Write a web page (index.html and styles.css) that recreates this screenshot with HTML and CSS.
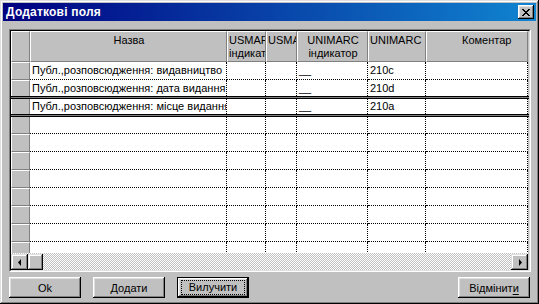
FILE: index.html
```html
<!DOCTYPE html>
<html lang="uk">
<head>
    <meta charset="UTF-8">
    <title>Додаткові поля</title>
    <link rel="stylesheet" href="styles.css">
</head>
<body>
    <div class="window">
        <div class="titlebar">
            <span class="title">Додаткові поля</span>
            <button class="close-btn">
                <svg width="8" height="7" viewBox="0 0 8 7"><path d="M0 0h2v1h1v1h2v-1h1v-1h2v1h-1v1h-1v1h-1v1h1v1h1v1h1v1h-2v-1h-1v-1h-2v1h-1v1h-2v-1h1v-1h1v-1h1v-1h-1v-1h-1v-1h-1z" fill="#000"/></svg>
            </button>
        </div>

        <div class="content">
            <div class="grid">
                <div class="grid-inner">
                    <div class="row head">
                        <div class="ind"></div>
                        <div class="hcell center">Назва</div>
                        <div class="hcell">USMARC<br>індикатор</div>
                        <div class="hcell">USMARC</div>
                        <div class="hcell center">UNIMARC<br>індикатор</div>
                        <div class="hcell">UNIMARC</div>
                        <div class="hcell comment">Коментар</div>
                    </div>

                    <div class="grid-body">
                        <div class="row">
                            <div class="ind"></div>
                            <div class="cell">Публ.,розповсюдження: видавництво</div>
                            <div class="cell"></div>
                            <div class="cell"></div>
                            <div class="cell">__</div>
                            <div class="cell">210c</div>
                            <div class="cell"></div>
                        </div>
                        <div class="row">
                            <div class="ind"></div>
                            <div class="cell">Публ.,розповсюдження: дата видання</div>
                            <div class="cell"></div>
                            <div class="cell"></div>
                            <div class="cell">__</div>
                            <div class="cell">210d</div>
                            <div class="cell"></div>
                        </div>
                        <div class="row current">
                            <div class="ind"></div>
                            <div class="cell">Публ.,розповсюдження: місце видання</div>
                            <div class="cell"></div>
                            <div class="cell"></div>
                            <div class="cell">__</div>
                            <div class="cell">210a</div>
                            <div class="cell"></div>
                        </div>
                        <div class="row"><div class="ind"></div><div class="cell"></div><div class="cell"></div><div class="cell"></div><div class="cell"></div><div class="cell"></div><div class="cell"></div></div>
                        <div class="row"><div class="ind"></div><div class="cell"></div><div class="cell"></div><div class="cell"></div><div class="cell"></div><div class="cell"></div><div class="cell"></div></div>
                        <div class="row"><div class="ind"></div><div class="cell"></div><div class="cell"></div><div class="cell"></div><div class="cell"></div><div class="cell"></div><div class="cell"></div></div>
                        <div class="row"><div class="ind"></div><div class="cell"></div><div class="cell"></div><div class="cell"></div><div class="cell"></div><div class="cell"></div><div class="cell"></div></div>
                        <div class="row"><div class="ind"></div><div class="cell"></div><div class="cell"></div><div class="cell"></div><div class="cell"></div><div class="cell"></div><div class="cell"></div></div>
                        <div class="row"><div class="ind"></div><div class="cell"></div><div class="cell"></div><div class="cell"></div><div class="cell"></div><div class="cell"></div><div class="cell"></div></div>
                        <div class="row"><div class="ind"></div><div class="cell"></div><div class="cell"></div><div class="cell"></div><div class="cell"></div><div class="cell"></div><div class="cell"></div></div>
                        <div class="row"><div class="ind"></div><div class="cell"></div><div class="cell"></div><div class="cell"></div><div class="cell"></div><div class="cell"></div><div class="cell"></div></div>
                    </div>

                    <div class="hscroll">
                        <div class="sb-btn">
                            <svg width="4" height="7" viewBox="0 0 4 7"><path d="M3 0v7L0 3.5z" fill="#000"/></svg>
                        </div>
                        <div class="sb-thumb"></div>
                        <div class="sb-track"></div>
                        <div class="sb-btn">
                            <svg width="4" height="7" viewBox="0 0 4 7"><path d="M1 0v7L4 3.5z" fill="#000"/></svg>
                        </div>
                    </div>
                </div>
            </div>

            <div class="buttons">
                <button class="btn">Ok</button>
                <button class="btn">Додати</button>
                <button class="btn default"><span class="focus">Вилучити</span></button>
                <button class="btn cancel">Відмінит<u>и</u></button>
            </div>
        </div>
    </div>
</body>
</html>
```

FILE: styles.css
```css
body {
    margin: 0;
    padding: 0;
    font-family: 'Liberation Sans', Arial, sans-serif;
    font-size: 11px;
    color: #000;
    background-color: #c0c0c0;
}

.window {
    width: 539px;
    height: 304px;
    box-sizing: border-box;
    padding: 3px;
    background-color: #c0c0c0;
    box-shadow: inset -1px -1px #000, inset 1px 1px #dfdfdf, inset -2px -2px #808080, inset 2px 2px #fff;
}

.titlebar {
    height: 18px;
    display: flex;
    align-items: center;
    justify-content: space-between;
    padding: 0 2px 0 3px;
    background: linear-gradient(to right, #000080, #1084d0);
}

.title {
    color: #fff;
    font-weight: bold;
    font-size: 12px;
    letter-spacing: 0.2px;
}

.close-btn {
    width: 16px;
    height: 14px;
    padding: 0;
    border: none;
    background-color: #c0c0c0;
    display: flex;
    align-items: center;
    justify-content: center;
    box-shadow: inset -1px -1px #000, inset 1px 1px #fff, inset -2px -2px #808080, inset 2px 2px #dfdfdf;
}

.content {
    padding: 8px 5px 0 6px;
}

.grid {
    height: 243px;
    box-sizing: border-box;
    border: 1px solid;
    border-color: #808080 #fff #fff #808080;
}

.grid-inner {
    height: 100%;
    box-sizing: border-box;
    border: 1px solid;
    border-color: #000 #dfdfdf #dfdfdf #000;
    display: flex;
    flex-direction: column;
    background-color: #c0c0c0;
}

.row {
    display: grid;
    grid-template-columns: 19px 197px 39px 31px 71px 58px 102px;
    height: 18px;
    flex-shrink: 0;
}

.row.head {
    height: 31px;
}

.grid-body {
    height: 191px;
    overflow: hidden;
}

.ind {
    box-sizing: border-box;
    background-color: #c0c0c0;
    border-top: 1px solid #fff;
    border-left: 1px solid #fff;
    border-right: 1px solid #808080;
    border-bottom: 1px solid #808080;
}

.hcell {
    box-sizing: border-box;
    background-color: #c0c0c0;
    border-top: 1px solid #fff;
    border-left: 1px solid #fff;
    border-right: 1px solid #808080;
    border-bottom: 1px solid #808080;
    padding: 2px 0 0 1px;
    line-height: 13px;
    white-space: nowrap;
    overflow: hidden;
}

.hcell.center {
    text-align: center;
}

.hcell.comment {
    padding-left: 35px;
}

.cell {
    box-sizing: border-box;
    background-color: #fff;
    border-right: 1px dotted #000;
    border-bottom: 1px dotted #000;
    padding: 2px 0 0 2px;
    line-height: 13px;
    white-space: nowrap;
    overflow: hidden;
}

.row.current {
    position: relative;
}

.row.current::before,
.row.current::after {
    content: '';
    position: absolute;
    left: 0;
    right: 0;
    height: 3px;
    background: linear-gradient(#000 0 1px, #808080 1px 2px, #000 2px 3px);
}

.row.current::before {
    top: -2px;
}

.row.current::after {
    bottom: -1px;
}

.hscroll {
    height: 17px;
    display: flex;
    width: 517px;
    background: repeating-conic-gradient(#c0c0c0 0 25%, #fff 0 50%) 0 0 / 2px 2px;
}

.sb-btn {
    width: 17px;
    height: 16px;
    margin-top: 1px;
    box-sizing: border-box;
    background-color: #c0c0c0;
    display: flex;
    align-items: center;
    justify-content: center;
    box-shadow: inset -1px -1px #000, inset 1px 1px #dfdfdf, inset -2px -2px #808080, inset 2px 2px #fff;
}

.sb-thumb {
    width: 15px;
    height: 16px;
    margin-top: 1px;
    background-color: #c0c0c0;
    box-shadow: inset -1px -1px #000, inset 1px 1px #dfdfdf, inset -2px -2px #808080, inset 2px 2px #fff;
}

.sb-track {
    flex: 1;
}

.buttons {
    display: flex;
    gap: 12px;
    margin-top: 5px;
    padding-right: 1px;
}

.btn {
    width: 72px;
    height: 21px;
    padding: 0;
    border: none;
    font-family: 'Liberation Sans', Arial, sans-serif;
    font-size: 11px;
    color: #000;
    background-color: #c0c0c0;
    box-shadow: inset -1px -1px #000, inset 1px 1px #fff, inset -2px -2px #808080, inset 2px 2px #dfdfdf;
}

.btn.default {
    box-shadow: inset 0 0 0 1px #000, inset -2px -2px #000, inset 2px 2px #fff, inset -3px -3px #808080, inset 3px 3px #dfdfdf;
}

.btn .focus {
    display: inline-block;
    width: 62px;
    line-height: 13px;
    border: 1px dotted #000;
}

.btn.cancel {
    margin-left: auto;
}

.btn u {
    text-underline-offset: 2px;
}
```
